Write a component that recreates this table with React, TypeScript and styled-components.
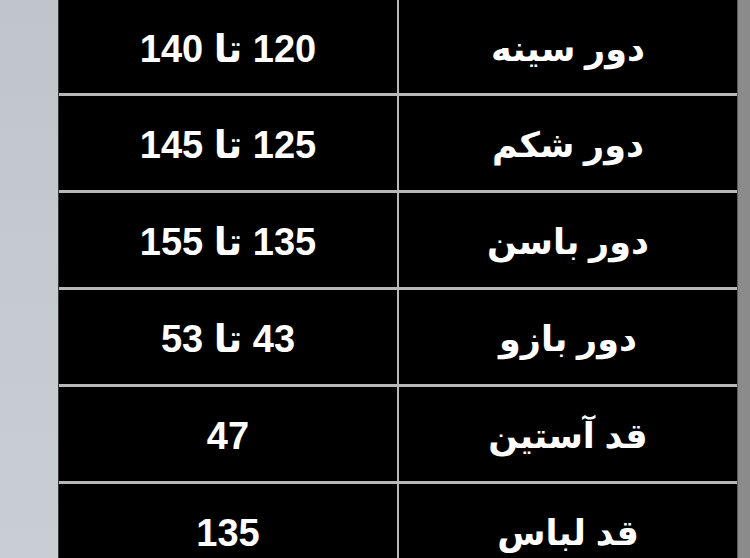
import React from "react";
import styled, { createGlobalStyle } from "styled-components";

const Global = createGlobalStyle`
  html, body { margin: 0; padding: 0; }
  body { width: 750px; height: 558px; overflow: hidden; background: #8a8a8a; }
`;

const Page = styled.div`
  display: flex;
  width: 750px;
  height: 558px;
  overflow: hidden;
`;

const LeftStrip = styled.div`
  width: 58px;
  flex: none;
  background: linear-gradient(180deg, #c0c5cc 0%, #c6cad1 60%, #c9cdd4 100%);
  border-right: 1px solid #3a3a3a;
`;

const RightStrip = styled.div`
  width: 13px;
  flex: none;
  background: #8b8b8b;
  border-left: 1px solid #5a5a5a;
  box-sizing: border-box;
`;

const Table = styled.div`
  flex: 1;
  display: grid;
  grid-template-columns: 338px 338px;
  grid-template-rows: 93px repeat(5, 94px);
  column-gap: 2px;
  row-gap: 3px;
  background: #b8b8b8;
  align-content: start;
  direction: rtl;
`;

const Cell = styled.div<{ $size: number }>`
  background: #000;
  color: #fff;
  display: flex;
  align-items: center;
  justify-content: center;
  font-family: "Liberation Sans", "DejaVu Sans", sans-serif;
  font-weight: 700;
  font-size: ${(p) => p.$size}px;
  direction: rtl;
  padding-top: 4px;
  box-sizing: border-box;
`;

const rows: [string, string][] = [
  ["دور سینه", "120 تا 140"],
  ["دور شکم", "125 تا 145"],
  ["دور باسن", "135 تا 155"],
  ["دور بازو", "43 تا 53"],
  ["قد آستین", "47"],
  ["قد لباس", "135"],
];

export default function App() {
  return (
    <>
      <Global />
      <Page>
        <LeftStrip />
        <Table>
          {rows.map(([label, value], i) => (
            <React.Fragment key={i}>
              <Cell $size={35}>{label}</Cell>
              <Cell $size={38}>{value}</Cell>
            </React.Fragment>
          ))}
        </Table>
        <RightStrip />
      </Page>
    </>
  );
}
